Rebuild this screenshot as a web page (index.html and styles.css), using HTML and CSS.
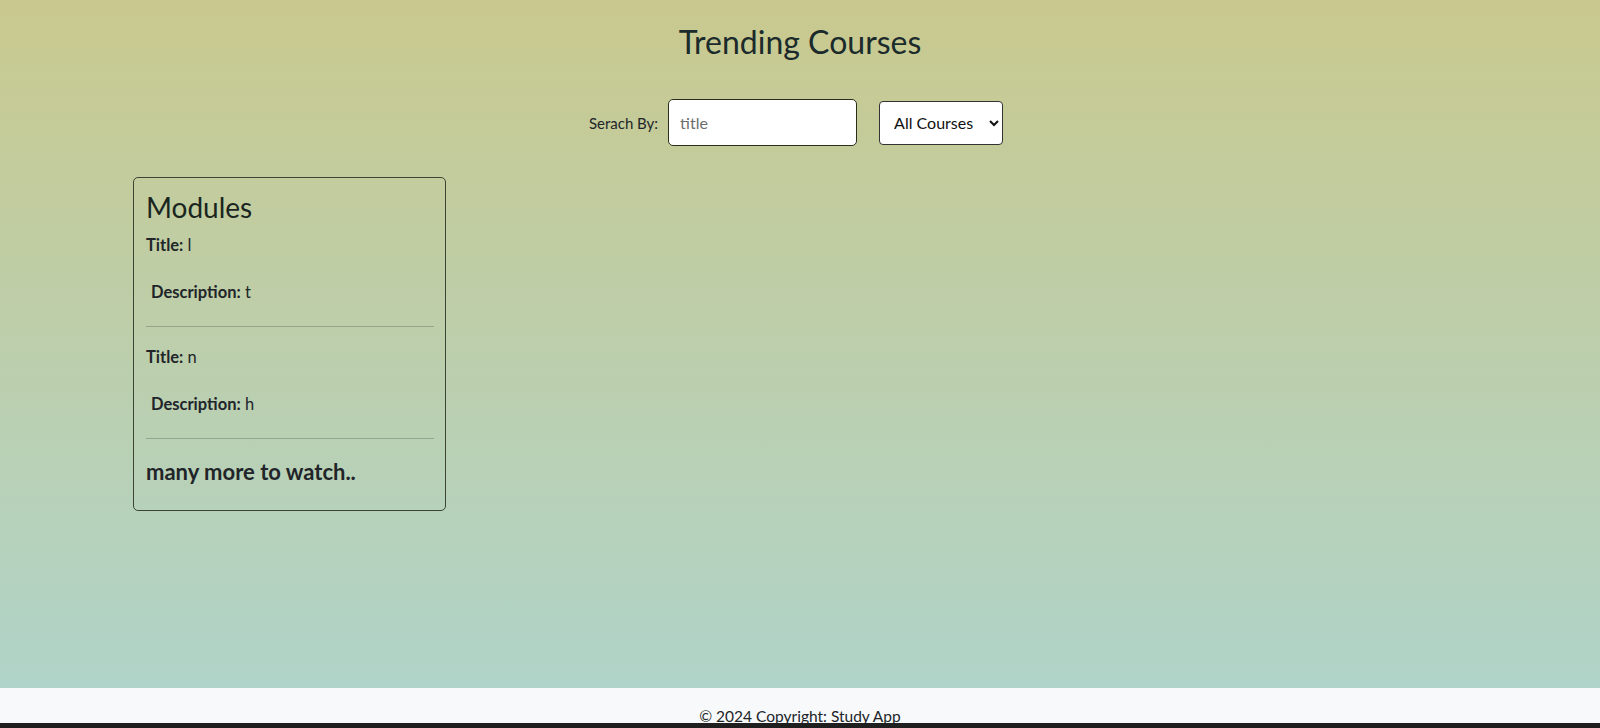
FILE: index.html
```html
<!DOCTYPE html>
<html lang="en">
<head>
<meta charset="utf-8">
<title>Trending Courses</title>
<link rel="stylesheet" href="styles.css">
</head>
<body>
<main class="page">
  <h1 class="page-title">Trending Courses</h1>
  <div class="search-row">
    <label class="search-label" for="q">Serach By:</label>
    <input class="search-input" id="q" type="text" placeholder="title">
    <select class="search-select">
      <option>All Courses</option>
    </select>
  </div>
  <section class="cards">
    <article class="card">
      <h3 class="card-title">Modules</h3>
      <div class="module">
        <p class="module-title"><b>Title:</b> l</p>
        <p class="module-desc"><b>Description:</b> t</p>
      </div>
      <hr class="divider">
      <div class="module">
        <p class="module-title"><b>Title:</b> n</p>
        <p class="module-desc"><b>Description:</b> h</p>
      </div>
      <hr class="divider">
      <p class="more">many more to watch..</p>
    </article>
  </section>
</main>
<footer class="footer">
  <p class="footer-text">© 2024 Copyright: Study App</p>
</footer>
<div class="bottom-bar"></div>
</body>
</html>
```

FILE: styles.css
```css
html, body {
  margin: 0;
  padding: 0;
  height: 100%;
  overflow: hidden;
}
body {
  font-family: Lato, "Open Sans", sans-serif;
  color: #212529;
  background: #f8f9fa;
}
.page {
  height: 688px;
  box-sizing: border-box;
  background: linear-gradient(to bottom, #c9c98e 0%, #b0d4c9 100%);
  padding-top: 22px;
}
.page-title {
  margin: 0;
  text-align: center;
  font-weight: 400;
  font-size: 32px;
  line-height: 40px;
  color: #1b2a2a;
}
.search-row {
  display: flex;
  justify-content: center;
  align-items: center;
  margin-top: 37px;
  padding-right: 8px;
}
.search-label {
  font-size: 15px;
  margin-right: 10px;
}
.search-input {
  width: 189px;
  height: 47px;
  box-sizing: border-box;
  border: 1px solid #2a2f1a;
  border-radius: 5px;
  padding: 0 11px;
  font-family: inherit;
  font-size: 16px;
  background: #fff;
  color: #212529;
}
.search-input::placeholder {
  color: #6c6c6c;
}
.search-select {
  margin-left: 22px;
  width: 124px;
  height: 44px;
  box-sizing: border-box;
  border: 1px solid #333;
  border-radius: 4px;
  padding: 0 6px 0 10px;
  font-family: inherit;
  font-size: 16px;
  background: #fff;
  color: #111;
}
.cards {
  display: flex;
  padding: 0 133px;
  margin-top: 31px;
}
.card {
  width: 313px;
  box-sizing: border-box;
  border: 1px solid #3c4433;
  border-radius: 5px;
  padding: 12px 11px 13px 12px;
}
.card-title {
  margin: 0 0 9px;
  font-weight: 400;
  font-size: 28px;
  line-height: 34px;
  color: #1b2520;
}
.module p {
  margin: 0;
  font-size: 16.5px;
  line-height: 24px;
}
.module-title {
  margin-bottom: 23px !important;
}
.module-desc {
  padding-left: 5px;
  margin-bottom: 22px !important;
}
.divider {
  border: 0;
  border-top: 1px solid rgba(0, 0, 0, 0.2);
  margin: 0 0 18px;
}
.more {
  margin: 20px 0 12px;
  font-weight: 700;
  font-size: 22px;
  line-height: 26px;
}
.footer {
  height: 35px;
  background: #f8f9fa;
  text-align: center;
  overflow: hidden;
}
.footer-text {
  margin: 0;
  padding-top: 16px;
  font-size: 15.5px;
  line-height: 24px;
  color: #212529;
}
.bottom-bar {
  height: 5px;
  background: #1f1f1f;
}
```
